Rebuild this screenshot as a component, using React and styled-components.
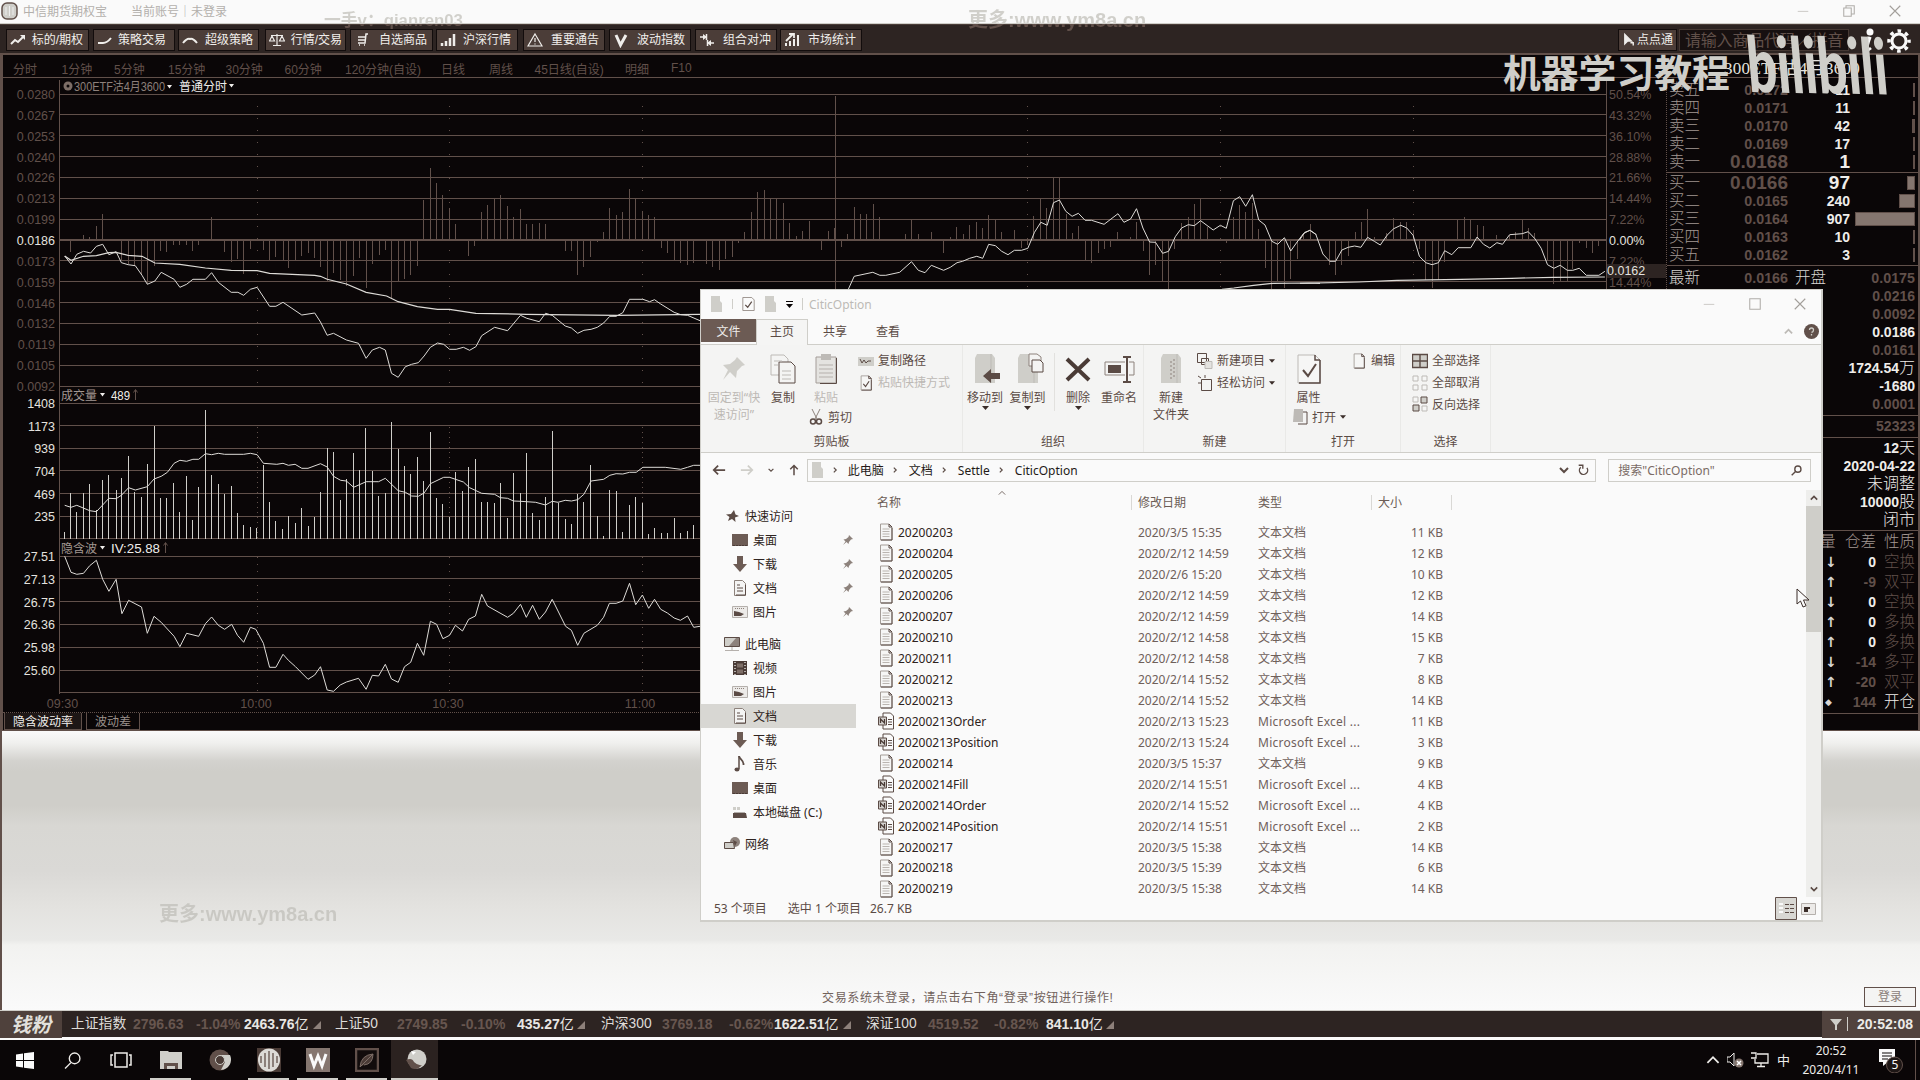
import React from "react";
import styled, { createGlobalStyle, css } from "styled-components";

const C = {
  ink: "#0a0607",
  brown: "#61504a",
  light: "#cfcec9",
  white: "#fafafa",
  bar: "#2d2422",
  button: "#4b3d38",
};
const UI = `"Noto Sans", "Noto Sans CJK SC", sans-serif`;
const APP = `"Liberation Sans", "Noto Sans CJK SC", sans-serif`;

const Global = createGlobalStyle`
  * { box-sizing: border-box; }
  body { margin: 0; background: ${C.ink}; overflow: hidden; }
`;

/* ---------- chart data ---------- */

const PRICE = [
  "145,768 159,792 172,763 187,754 203,759 216,739 230,733 244,764 260,755 272,788 287,794 303,797 318,826 330,853 347,843 361,817 390,838 403,862 418,853 432,838 460,838 474,818 489,847 518,877 533,877 546,886 561,868 576,862 604,919 618,919 634,907 676,945 705,939 718,966 733,1006 747,1000 776,1020 803,1030 820,1075 834,1050 850,1042 863,1050 877,1120 892,1132 908,1100 922,1093 937,1088 950,1068 964,1042 980,1029 994,1033 1007,1048 1022,1048 1038,1042 1052,1051 1066,1040 1079,1007 1108,982 1137,992 1166,946 1180,955 1208,965 1222,940 1237,946 1266,978 1280,984 1294,1000 1308,991 1324,988 1338,982 1352,969 1366,949 1380,949 1395,938 1410,898 1440,898 1455,905 1466,899 1480,912 1510,937 1525,944 1540,946 1568,962",
  "375,868 390,829 437,817 455,826 470,826 505,817 535,785 552,811 569,818 585,796 616,811 633,802 650,788 664,784 682,775 700,769 715,775 730,733 747,737 763,754 779,764 795,751 813,751 829,745 846,697 862,667 878,676 894,608 909,600 925,634 941,649 957,640 974,661 990,661 1022,673 1057,641 1072,667 1089,657 1104,626 1120,684 1137,726 1152,727 1170,760 1185,754 1202,710 1218,684 1235,674 1250,677 1266,662 1298,690 1316,676 1331,685 1349,602 1365,590 1380,619 1397,584 1413,660 1429,675 1446,724 1461,733 1478,713 1494,753 1510,726 1526,701 1542,691 1559,704",
  "-1,720 12,697 26,691 40,703 58,762 75,784 90,784 106,750 122,742 138,738 154,742 171,712 188,724 203,735 220,706 237,686 255,676 270,684 286,706 302,769 318,788 334,794 350,788 366,752 384,764 400,743 432,743 448,711 464,733 480,744 498,728 512,733 530,704 562,701 577,695 594,716 610,745 626,794 642,805 658,796 676,811 690,811 706,805 724,826 756,826 771,814",
];
const AVERAGE = [
  "145,768 159,781 187,769 216,767 244,758 260,757 287,766 318,769 347,789 403,793 460,804 518,811 576,812 604,820 705,826 718,829 733,838 776,852 820,877 866,888 892,905 935,920 980,928 1007,928 1066,940 1180,943 1380,946 1568,943",
  "1320,868 1350,864 1400,856 1450,850 1540,849 1568,850",
  "0,850 148,846 245,841 407,838 535,835 640,832 771,831",
];
const DELTA = [
  "158,756 187,706 201,712 216,678 230,642 272,780 287,793 301,797 316,826 330,853 345,797 360,752 374,757 389,735 403,735 417,735 431,753 445,735 474,651 503,756 518,786 532,778 546,822 561,746 590,750 604,784 618,770 634,783 646,805 662,780 676,768 690,758 704,774 718,802 733,847 747,818 762,840 776,857 792,828 805,774 820,864 834,793 849,764 863,750 877,893 892,842 906,836 920,824 935,797 949,600 964,504 978,549 992,586 1007,624 1020,672 1049,767 1064,738 1079,636 1092,615 1108,597 1121,586 1137,618 1150,650 1166,627 1179,672 1193,672 1208,669 1222,672 1266,753 1280,753 1294,825 1308,800 1323,770 1338,727 1352,697 1365,624 1380,645 1395,636 1410,567 1424,595 1439,633 1453,645 1466,651 1482,744 1496,760 1510,779 1525,788 1540,795 1554,790",
  "16,792 31,800 49,809 64,776 81,770 97,728 112,697 130,636 145,576 163,570 179,596 194,596 211,609 227,669 243,709 259,693 277,663 307,750 325,693 341,684 358,740 373,703 390,621 406,642 421,642 438,612 454,651 519,703 535,660 552,703 585,697 616,758 633,711 649,681 666,703 682,675 700,666 714,684 730,645 747,658 763,697 795,690 813,744 829,735 844,648 861,597 877,624 894,531 909,531 927,642 941,700 957,679 975,782 990,789 1007,759 1023,746 1038,741 1056,697 1088,712 1104,666 1121,752 1137,824 1152,795 1169,842 1185,868 1201,748 1218,669 1235,651 1250,612 1266,597 1284,680 1332,730 1349,651 1364,615 1380,636 1397,610 1412,687 1430,803 1445,868 1460,845 1478,863 1494,836 1510,777 1527,700 1544,672",
  "75,796 90,824 106,795 122,767 140,697 155,666 171,627 188,712 220,700 236,654 254,666 270,666 286,690 302,748 318,840 334,863 350,840 366,785 398,660 416,651 432,660 448,676 464,678 498,706 530,704 546,695 562,658 577,684 594,700 626,780 642,853 658,845 676,845 690,806 706,728 724,745 740,758 756,737",
];
const VOLUME =
  "145,516 158,400 171,456 187,398 201,371 216,450 230,359 243,345 260,389 272,355 288,288 301,395 317,411 330,312 345,199 359,415 373,415 389,368 403,457 418,348 431,479 445,382 460,151 474,345 489,373 503,403 519,378 532,459 546,495 561,501 575,504 590,316 604,426 617,483 633,507 646,468 662,490 675,444 690,498 705,471 718,396 733,263 747,276 763,420 776,357 792,279 805,330 819,205 834,333 848,407 863,399 877,186 892,267 906,317 920,342 935,292 949,363 964,216 978,414 991,432 1007,471 1020,336 1036,393 1050,321 1065,297 1079,427 1092,427 1108,429 1121,369 1137,474 1150,339 1166,400 1179,279 1193,459 1208,480 1222,411 1237,213 1250,429 1267,477 1280,492 1294,403 1308,427 1323,315 1338,468 1352,528 1365,390 1380,393 1395,516 1410,435 1424,411 1439,429 1453,522 1466,504 1482,519 1496,519 1510,474 1524,519 1540,513 1554,495";
const VOLUME_MA =
  "145,436 159,442 172,436 201,452 216,455 244,415 260,416 272,406 288,383 303,390 330,380 345,357 361,349 375,337 390,310 403,301 418,304 432,298 445,298 460,281 474,284 489,280 503,283 546,283 561,280 576,284 590,310 620,313 634,310 646,316 661,313 676,325 690,325 718,311 733,321 747,349 763,361 776,363 792,382 820,365 848,365 863,355 892,392 908,397 922,408 937,409 950,399 964,371 994,352 1007,352 1038,366 1052,383 1079,400 1108,403 1121,413 1137,415 1150,423 1166,424 1200,427 1222,435 1237,424 1250,427 1266,421 1280,423 1294,419 1308,403 1324,363 1352,358 1366,346 1380,341 1395,342 1410,337 1425,337 1440,322 1490,322 1525,328 1540,322 1554,316 1568,316";
const IV =
  "145,589 159,637 172,643 187,640 201,617 216,601 230,658 244,694 260,658 273,761 288,721 317,741 330,820 345,769 361,787 390,829 403,860 418,820 445,829 460,791 474,771 489,796 503,808 519,793 532,826 546,847 561,802 573,808 590,850 604,922 618,922 634,883 646,901 662,920 690,958 705,945 718,920 733,990 747,994 762,975 776,966 803,955 820,988 834,946 848,948 863,913 877,957 892,967 906,920 920,907 935,850 949,886 964,784 978,793 992,836 1007,826 1020,796 1036,813 1050,778 1065,768 1079,703 1092,738 1137,772 1150,760 1166,733 1179,772 1193,736 1208,778 1222,756 1237,718 1267,799 1280,811 1294,856 1308,820 1338,796 1352,772 1365,730 1380,730 1395,723 1410,670 1424,734 1439,705 1453,745 1466,718 1480,748 1495,759 1510,774 1524,781 1540,768 1554,802 1568,799";

/* each run of samples has its own origin and horizontal step */
const RUNS = [
  { x: 0, y: 0, k: 2.24 },
  { x: 700, y: 0, k: 2.529 },
  { x: 1300, y: 0, k: 2.529 },
];
const LOWER = { x: 0, y: 360, k: 2.24 };
const parse = (s, r) =>
  s.split(" ").map((p) => {
    const [a, b] = p.split(",").map(Number);
    return [r.x + a / r.k, r.y + b / 3];
  });
const toLine = (s, r) => parse(s, r).map((p) => p.map((n) => n.toFixed(1)).join(",")).join(" ");
const toBars = (s, r, base) =>
  parse(s, r).map(([x, y]) => `M${Math.floor(x) + 0.5},${base}V${y.toFixed(1)}`).join("");

/* ---------- shell ---------- */

const Screen = styled.div`
  position: relative; width: 1920px; height: 1080px; overflow: hidden;
  display: flex; flex-direction: column; background: ${C.ink}; font-family: ${APP}; white-space: nowrap;
`;
const TitleBar = styled.header`
  height: 24px; flex: none; display: flex; align-items: center; padding: 0 19px 2px 1px;
  background: ${C.white}; color: #b3b0ac; font-size: 12px; border-bottom: 1px solid ${C.light};
`;
const AppTitle = styled.span`margin-left: 5px; width: 108px;`;
const WindowButtons = styled.div`
  margin-left: auto; display: flex; align-items: center; gap: ${(p) => p.$gap}px;
`;
const Toolbar = styled.nav`
  height: 31px; flex: none; display: flex; align-items: flex-start; padding: 5px 0 0 7px;
  background: ${C.bar}; border-top: 1px solid #4a3d38; border-bottom: 2px solid ${C.brown};
`;
const ToolButton = styled.div`
  width: ${(p) => p.$w}px; margin-right: ${(p) => p.$gap}px; height: 20px; flex: none; display: flex; align-items: center;
  padding-right: ${(p) => p.$pad || 5}px; justify-content: space-between;
  background: ${C.button}; outline: 1px solid #120c0c; color: #f0eeeb; font-size: 12px; line-height: 20px;
  > svg { width: 16px; height: 16px; margin-left: 3px; }
`;
const SearchCode = styled.div`
  width: 170px; height: 22px; padding-left: 5px; font-size: 16px; line-height: 22px; letter-spacing: -0.2px;
  color: ${C.brown}; background: #171010; border: 1px solid #463934; margin-top: -1px;
`;
const ToolIcons = styled.div`
  display: flex; align-items: center; gap: 12px; margin-left: 12px; height: 22px;
`;
const Main = styled.main`
  height: 676px; flex: none; display: flex; background: ${C.ink};
  border-left: 3px solid ${C.brown}; border-right: 2px solid ${C.brown}; border-bottom: 1px solid ${C.brown};
`;
const ChartPane = styled.section`width: 1664px; flex: none; display: flex; flex-direction: column;`;
const Periods = styled.div`
  height: 23px; border-bottom: 1px solid ${C.brown}; color: ${C.brown};
  display: flex; align-items: center; padding: 4px 0 0 10px; font-size: 12px;
`;
const Period = styled.span`width: ${(p) => p.$w}px; flex: none;`;
const Section = styled.div`display: flex; height: ${(p) => p.$h}px; flex: none;`;
const Axis = styled.div`
  width: 56px; padding: ${(p) => p.$top}px 4px 0 0; text-align: right; flex: none; font-size: 12.5px;
  color: ${(p) => (p.$bright ? "#e4e2df" : C.brown)};
`;
const Percents = styled.div`
  width: 60px; margin-left: 2px; padding-top: 7px; font-size: 12.5px; color: ${C.brown};
  border-right: 1px dotted ${C.brown};
`;
const Tick = styled.div`
  height: ${(p) => p.$h}px; line-height: ${(p) => p.$h}px; ${(p) => p.$on && css`color: #e4e2df;`}
`;
const PriceTag = styled.div`
  height: 14px; line-height: 14px; margin: -9px 0 -5px -2px; background: #2d2422; color: #e4e2df; position: relative; font-size: 12.5px;
`;
const Plot = styled.svg`display: block; flex: none;`;
const TimeAxis = styled.div`
  height: 19px; display: flex; padding-left: 28px; color: ${C.brown}; font-size: 12.5px; line-height: 20px;
  border-bottom: 1px dotted ${C.brown};
`;
const Time = styled.span`width: 192px; text-align: center; &:first-child { width: 63px; margin-right: 66px; }`;
const Tabs = styled.div`display: flex; gap: 4px; padding-left: 1px;`;
const Tab = styled.div`
  width: ${(p) => p.$w}px; height: 17px; line-height: 18px; text-align: center; font-size: 12px;
  border: 1px solid ${C.brown}; border-top: 0; color: ${(p) => (p.$on ? "#efedea" : "#9b918c")};
  background: ${(p) => (p.$on ? "#1d1615" : "transparent")};
`;

/* ---------- order book ---------- */

const Book = styled.aside`flex: 1; display: flex; flex-direction: column; font-size: 14px;`;
const BookTitle = styled.div`
  height: 23px; border-bottom: 1px solid ${C.brown}; color: #e4e2df; font: 17px/27px "Liberation Serif", "Noto Sans CJK SC", serif;
  padding-left: 57px; letter-spacing: 0.3px;
`;
const BookGroup = styled.div`
  padding: ${(p) => p.$top || 1}px 0 ${(p) => p.$bottom || 1}px; border-bottom: 1px solid ${C.brown};
`;
const Level = styled.div`
  height: 18px; display: grid; grid-template-columns: 40px 79px 62px 5px 60px; align-items: center; padding-left: 2px;
`;
const Label = styled.span`font-size: 15.5px; line-height: 18px; color: ${(p) => (p.$bright ? "#d9d6d3" : "#a29792")}; font-weight: 300;`;
const Price = styled.span`
  text-align: right; font-weight: bold; color: ${C.brown}; font-size: ${(p) => (p.$big ? 19 : 14.3)}px; line-height: 18px;
`;
const Amount = styled(Price)`color: #efedea; font-size: ${(p) => (p.$big ? 19 : 14)}px;`;
const Depth = styled.span`
  grid-column: 5; justify-self: end; width: ${(p) => p.$w}px; height: 14px; background: ${(p) => (p.$w > 3 ? "#85766f" : C.brown)};
  border: 1px solid ${C.brown};
`;
const Stat = styled.div`
  height: 18px; line-height: 18px; text-align: right; padding-right: 3px; font-weight: bold; font-size: 14px;
  color: ${(p) => (p.$on ? "#efedea" : C.brown)};
  > span { font-size: 16px; font-weight: 300; }
`;
const StatPair = styled.div`
  height: 18px; display: grid; grid-template-columns: 40px 79px 7px 40px 1fr; align-items: center; padding: 0 3px 0 2px;
`;
const Trade = styled.div`
  height: 20px; line-height: 20px; display: grid; grid-template-columns: 14px 37px 39px;
  justify-content: end; padding-right: 3px; align-items: center; text-align: right;
  color: ${(p) => (p.$on ? "#efedea" : C.brown)}; font-weight: bold;
  > :first-child { margin-left: ${(p) => (p.$head ? -5 : 0)}px; text-align: left; }
`;
const Kind = styled.span`font-size: 15.5px; font-weight: 300; color: ${(p) => (p.$on ? "#efedea" : p.$head ? "#a29792" : C.brown)};`;
const Arrow = styled.span`color: #d9d6d3; font-size: ${(p) => (p.$small ? 9 : 14)}px; font-family: "DejaVu Sans", sans-serif;`;

/* ---------- lower area, index bar, taskbar ---------- */

const Backdrop = styled.section`
  flex: 1; display: flex; justify-content: space-between; align-items: flex-end; padding: 0 4px 3px 820px;
  border-left: 2px solid ${C.brown}; color: #71625c; font-size: 12px;
  background: linear-gradient(#fafafa 0, #f0f0ee 12px, #d3d2ce 30px, #cfcec9 40px, #cfcec9 74px, #d8d7d3 95px, #dad9d6 140px, #e3e2df 175px, #e9e9e7 209px, #f2f2f0 214px, #f6f6f5 245px, #f9f9f9 272px, #fafafa 280px);
`;
const Notice = styled.span`letter-spacing: 0.65px; line-height: 18px;`;
const Login = styled.span`
  width: 52px; height: 20px; border: 1px solid ${C.brown}; text-align: center; line-height: 18px; color: #8b807b; background: #f4f4f3;
`;
const IndexBar = styled.div`
  height: 30px; flex: none; display: flex; align-items: center; background: ${C.bar};
  border-top: 1px solid ${C.light}; border-bottom: 3px solid ${C.white}; font-size: 14px; color: #d9d6d3;
`;
const IndexLogo = styled.div`
  width: 62px; height: 27px; background: #4f413c; text-align: center; color: #e2e0dc; flex: none; margin-right: 9px;
  font: italic bold 20px/26px "Noto Sans CJK SC", sans-serif;
`;
const Cell = styled.span`
  width: ${(p) => p.$w}px; flex: none; line-height: 26px;
  ${(p) => p.$kind === "name" && css`font-size: 13.8px; color: #dedbd8;`}
  ${(p) => p.$kind === "dim" && css`font-weight: bold; color: #67564f;`}
  ${(p) => p.$kind === "sum" && css`font-weight: bold; color: #e9e7e4; > i { font-style: normal; font-weight: 400; }`}
`;
const Clock = styled.div`
  margin-left: auto; width: 98px; height: 27px; background: #51433e; display: flex; align-items: center; gap: 5px;
  padding-left: 8px; font-weight: bold; color: #eceae7;
  > span { margin-left: auto; padding-right: 7px; }
`;
const Taskbar = styled.footer`height: 40px; flex: none; display: flex; background: ${C.ink};`;
const Task = styled.div`
  width: ${(p) => p.$w || 49}px; height: 40px; display: flex; align-items: center; justify-content: center;
  background: ${(p) => (p.$on ? "#2b2220" : "transparent")};
  box-shadow: ${(p) => (p.$open ? `inset 0 -2px 0 ${C.light}` : "none")};
  ${(p) => p.$open && css`width: 41px; margin: 0 4px;`}
  ${(p) => p.$on && css`width: 47px; margin: 0;`}
`;
const Tray = styled.div`
  margin-left: auto; display: flex; align-items: center; color: #efedea; font: 12px/19px ${UI};
  > svg { flex: none; }
`;
const TrayText = styled.span`width: ${(p) => p.$w}px; text-align: center; font-size: ${(p) => p.$size || 12}px;`;
const TrayGap = styled.span`width: ${(p) => p.$w}px;`;
const ShowDesktop = styled.span`width: 5px; height: 40px; border-left: 1px solid ${C.brown};`;

/* ---------- explorer window ---------- */

const Explorer = styled.section`
  position: absolute; left: 700px; top: 289px; width: 1123px; height: 633px; background: ${C.white};
  border: 1px solid ${C.light}; border-right-width: 2px; border-bottom-width: 2px; display: flex; flex-direction: column;
  font: 12px/17px ${UI}; color: #3a2d29;
`;
const ExplorerTitle = styled.div`
  height: 29px; flex: none; display: flex; align-items: center; padding: 0 15px 1px 9px; color: #bdbab6;
`;
const QuickAccess = styled.div`display: flex; align-items: center; gap: 9px; margin-right: 6px;`;
const Divider = styled.i`width: 1px; height: ${(p) => p.$h || 12}px; background: ${C.light};`;
const RibbonTabs = styled.div`
  height: 26px; flex: none; display: flex; border-bottom: 1px solid ${C.light}; padding-right: 2px;
`;
const RibbonTab = styled.div`
  width: ${(p) => p.$w}px; height: ${(p) => (p.$file ? 23 : 26)}px; line-height: 25px; text-align: center; color: #5b4b45;
  ${(p) => p.$file && css`background: #6c5b54; color: #eeecea;`}
  ${(p) => p.$on && css`border: 1px solid ${C.light}; border-bottom: 0; background: #f5f5f4; line-height: 24px;`}
`;
const RibbonEnd = styled.div`margin-left: auto; display: flex; align-items: center; gap: 11px;`;
const Ribbon = styled.div`
  height: 108px; flex: none; display: flex; background: #f4f4f3; border-bottom: 1px solid ${C.light};
`;
const Group = styled.div`
  width: ${(p) => p.$w}px; flex: none; display: flex; flex-direction: column; border-right: 1px solid #e9e9e7; color: #5b4b45;
`;
const GroupBody = styled.div`height: 88px; display: flex; padding-left: ${(p) => p.$pad || 0}px;`;
const GroupName = styled.div`text-align: center; height: 18px; line-height: 18px;`;
const Big = styled.div`
  width: ${(p) => p.$w}px; flex: none; padding-top: 8px; display: flex; flex-direction: column; align-items: center;
  text-align: center; color: ${(p) => (p.$off ? "#bdb9b5" : "inherit")};
  > svg:first-child { width: 32px; height: 32px; margin-bottom: 4px; flex: none; }
`;
const SmallColumn = styled.div`padding: 5px 0 0 ${(p) => p.$pad || 0}px; display: flex; flex-direction: column;`;
const Small = styled.div`
  height: 21.7px; flex: none; display: flex; align-items: center; gap: 4px; color: ${(p) => (p.$off ? "#bdb9b5" : "inherit")};
  margin-top: ${(p) => p.$mt || 0}px; align-self: ${(p) => (p.$mt ? "flex-start" : "auto")};
  margin-left: ${(p) => p.$ml || 0}px;
  > svg { width: 16px; height: 16px; flex: none; }
  > svg.caret { width: 6px; height: 4px; }
`;
const BodyDivider = styled.i`width: 1px; height: 58px; margin: 8px 5px 0 5px; background: #e2e1de;`;
const AddressRow = styled.div`
  height: 36px; flex: none; display: flex; align-items: center; padding: 0 10px 2px 11px;
`;
const NavArrows = styled.div`display: flex; align-items: center; width: 95px; gap: 14px;`;
const Address = styled.div`
  width: 791px; height: 23px; border: 1px solid ${C.light}; display: flex; align-items: center; color: #241a18;
  padding: 0 6px 0 3px;
`;
const Crumb = styled.span`width: ${(p) => p.$w}px; flex: none; display: flex; align-items: center; gap: 8px; > svg { flex: none; }`;
const AddressEnd = styled.span`margin-left: auto; display: flex; align-items: center; gap: 9px;`;
const SearchBox = styled.div`
  margin-left: 12px; width: 203px; height: 23px; border: 1px solid ${C.light}; display: flex; align-items: center;
  justify-content: space-between; padding: 0 8px 0 9px; color: #7a6c66;
`;
const Content = styled.div`flex: 1; display: flex; min-height: 0;`;
const Tree = styled.div`width: 155px; padding-top: 15px; flex: none;`;
const TreeItem = styled.div`
  height: 24px; display: flex; align-items: center; gap: ${(p) => (p.$root ? 5 : 5)}px;
  padding: 0 3px 0 ${(p) => (p.$root ? 23 : 31)}px; margin-top: ${(p) => p.$mt || 0}px;
  background: ${(p) => (p.$on ? "#d8d7d3" : "transparent")}; color: #2e2320;
  > svg { width: 16px; height: 16px; flex: none; }
  > svg:nth-child(3) { width: 10px; height: 10px; margin-left: auto; }
`;
const Files = styled.div`flex: 1; display: flex; flex-direction: column;`;
const SortMark = styled.div`height: 5px; flex: none; padding-left: 142px; display: flex;`;
const fileColumns = css`display: grid; flex: none; grid-template-columns: 20px 240px 120px 120px 65px; padding-left: 22px; align-items: center;`;
const HeadRow = styled.div`
  ${fileColumns} height: 17px; margin-bottom: 11px; color: #6b5c55; padding-left: 21px;
  grid-template-columns: 254px 7px 120px 113px 7px 73px 1px; > i { height: 15px; width: 1px; background: #d9d8d5; }
`;
const FileRow = styled.div`
  ${fileColumns} height: 20.98px; color: #2e2320; > svg { width: 16px; height: 18px; }
`;
const Meta = styled.span`color: #6f605a; text-align: ${(p) => (p.$right ? "right" : "left")}; letter-spacing: ${(p) => (p.$wide ? 0.25 : 0)}px;`;
const ScrollBar = styled.div`
  width: 15px; margin: 1px 0 0; background: #eeeeec; display: flex; flex-direction: column; align-items: center; flex: none;
`;
const Thumb = styled.div`width: 15px; height: 126px; background: ${C.light};`;
const ScrollEnd = styled.div`height: 16px; display: flex; align-items: center; margin-top: ${(p) => (p.$last ? "auto" : 0)};`;
const StatusRow = styled.div`
  height: 23px; flex: none; display: flex; align-items: center; padding: 0 5px 0 13px; color: #5b4b45;
  > span { margin-right: 21px; } > span + span { margin-right: 9px; }
`;
const Views = styled.div`margin-left: auto; display: flex; align-items: center; gap: 4px; height: 23px;`;

/* ---------- overlays ---------- */

const Watermark = styled.div`
  position: absolute; left: ${(p) => p.$x}px; top: ${(p) => p.$y}px; font: bold ${(p) => p.$size}px/24px ${APP};
  letter-spacing: ${(p) => p.$ls || 0}px; color: transparent; background-clip: text; -webkit-background-clip: text;
  background-image: ${(p) => (p.$split ? `linear-gradient(#d0cfca ${p.$split}px, #61504a ${p.$split}px)` : "linear-gradient(#c9c8c3,#c9c8c3)")};
`;
const Course = styled.div`
  position: absolute; left: 1503px; top: 48px; font: bold 37.8px/46px "Noto Sans CJK SC", sans-serif; color: ${C.light};
`;
const VideoLogo = styled.div`
  position: absolute; left: 1743px; top: 24px; font: 900 77px/76px Lato, sans-serif; color: ${C.light};
  transform-origin: 0 0; transform: rotate(1deg) scaleX(0.68) skewX(9deg);
`;
const Pointer = styled.svg`position: absolute; left: 1796px; top: 588px;`;

/* ---------- icons ---------- */

const Caret = ({ fill = "#3a2d29" }) => (
  <svg className="caret" width="7" height="4" viewBox="0 0 7 4"><path d="M0 0h7L3.5 4z" fill={fill} /></svg>
);
const Chevron = ({ d = "down", c = "#5b4b45", s = 9, w = 2 }) => {
  const rot = { down: 0, up: 180, right: -90, left: 90 }[d];
  return (
    <svg width={s} height={s} viewBox="0 0 10 10"><path transform={`rotate(${rot} 5 5)`} d="M1 3l4 4 4-4" fill="none" stroke={c} strokeWidth={w} /></svg>
  );
};
const S = ({ children, w = 16, h = 16, vb = "0 0 16 16", c = "#efedea", sw = 1.5 }) => (
  <svg width={w} height={h} viewBox={vb} fill="none" stroke={c} strokeWidth={sw}>{children}</svg>
);
const WinMin = () => <S w={12} c="#bdbab6" sw={1}><path d="M1 8.5h14" /></S>;
const WinMax = () => <S w={12} h={12} c="#b0ada9" sw={1.4}><path d="M1 1h14v14H1z" /></S>;
const WinRestore = () => <S w={12} h={12} c="#b0ada9" sw={1.4}><path d="M1 4h10v11H1zM4 4V1h11v11h-4" /></S>;
const WinClose = () => <S w={12} h={12} c="#a39f9b" sw={1.5}><path d="M1 1l14 14M15 1L1 15" /></S>;

const toolIcons = {
  up: <><path d="M1 12l4-4 3 2 6-6" strokeWidth="2" /><path d="M10 3h5v5z" fill="#efedea" stroke="none" /></>,
  curve: <path d="M1 11h5q4 0 8-5" strokeWidth="2" />,
  arc: <path d="M1 11q4-5 7-4 3-1 7 4" strokeWidth="2" />,
  scales: <path d="M8 2v11M4 13.5h8M2 3.5h12M3 4l-2.500 5h5zM13 4l-2.500 5h5z" strokeWidth="1.200" />,
  cart: <path d="M14 2h-2l-1 9H4M4 5h8M4 8h8M5 13h1M10 13h1" />,
  bars: <path d="M2 14v-3M6 14V9M10 14V6M14 14V2" strokeWidth="2.500" />,
  warn: <path d="M8 2l7 12H1zM8 6v4M8 11.500v1" strokeWidth="1.200" />,
  v: <path d="M3 3l4.500 10L13 3" strokeWidth="3" />,
  hedge: <><path d="M1 5h6M9 11h6M7.500 2v6M8.500 8v6" /><path d="M4 2l4 3-4 3zM12 8l-4 3 4 3z" fill="#efedea" stroke="none" /></>,
  stats: <><path d="M2 14v-3M6 14V9M10 14V7M14 14V3" strokeWidth="2" /><path d="M2 9l7-7M5 2h5v4" strokeWidth="1.800" /></>,
};

const Page = ({ lines, big }) => (
  <svg viewBox="0 0 16 18">
    <path d="M2.500 1h8.500l3 3v13h-11.500z" fill="#f6f6f5" stroke="#a49d98" />
    <path d="M11 1l3 3h-3zM14 5v12H3" fill="none" stroke="#5b4b45" />
    {lines && <path d="M4.500 6h7M4.500 8.500h7M4.500 11h7M4.500 13.500h7" stroke="#bab5b0" />}
    {big && <path d="M5 10l2.500 3 4-6" fill="none" stroke="#5b4b45" strokeWidth="1.300" />}
  </svg>
);
const Excel = () => (
  <svg viewBox="0 0 16 18">
    <path d="M5 1h7.500l3 3v13H5z" fill="#fafafa" stroke="#5b4b45" />
    <path d="M10 7.500h4M10 10h4M10 12.500h4" stroke="#5b4b45" />
    <path d="M.500 5h8v8h-8z" fill="#d5d2cf" stroke="#5b4b45" />
    <path d="M2.500 11V7l4 4V7" stroke="#4a3b36" strokeWidth="1.300" fill="none" />
  </svg>
);
const FolderBig = ({ children }) => (
  <svg viewBox="0 0 32 32"><path d="M8 1h15l3 4v25H6V5z" fill="#cfcec9" /><path d="M22 1v29" stroke="#bdbbb6" />{children}</svg>
);
const FolderSmall = () => <svg width="13" height="16" viewBox="0 0 13 16"><path d="M1 0h9v5l2 2v9H1z" fill="#cfcec9" /></svg>;

const tree = {
  star: <svg viewBox="0 0 16 16"><path d="M10 2l1.500 4.500L15 8l-4 1.500.500 4.500-3.500-3-4 2 1.500-4L2 6.500l5-.500z" fill="#5b4b45" /></svg>,
  desk: <svg viewBox="0 0 16 16"><path d="M0 2h16v12H0z" fill="#6c5b54" /><path d="M1 13.500h14" stroke="#4a3b36" strokeDasharray="2 1" /></svg>,
  down: <svg viewBox="0 0 16 16"><path d="M5 0h6v8h4l-7 8-7-8h4z" fill="#6c5b54" /></svg>,
  doc: <svg viewBox="0 0 16 16"><path d="M2.500.500h8l3 3v12h-11z" fill="#f4f4f3" stroke="#8d827c" /><path d="M5 5h3M5 8h6M5 11h6M13.500 5v10H4" stroke="#5b4b45" fill="none" /></svg>,
  pic: <svg viewBox="0 0 16 16"><path d="M.500 2.500h15v11H.500z" fill="#eceae8" stroke="#b5b0ac" /><path d="M2 11V7l5 1 5 2-3 2H2z" fill="#5b4b45" /><path d="M3 4.500h9" stroke="#8d827c" strokeDasharray="1 1" /></svg>,
  pc: <svg viewBox="0 0 16 16"><path d="M.500 1.500h15v9H.500z" fill="#8d827c" stroke="#5b4b45" /><path d="M1 2h11L5 10H1z" fill="#cfcec9" /><path d="M8 11v3M1 14.500h14" stroke="#b5b0ac" /></svg>,
  video: <svg viewBox="0 0 16 16"><path d="M1 1h14v14H1z" fill="#4a3b36" /><path d="M3 2v13M13 2v13" stroke="#d9d8d5" strokeDasharray="1 2" strokeWidth="1.500" /><path d="M5 3.500h6v4H5zM5 9.500h6v4H5z" fill="#7d6e67" /></svg>,
  music: <svg viewBox="0 0 16 16"><path d="M7 0c1 4 5 4 4.500 9" fill="none" stroke="#5b4b45" strokeWidth="1.800" /><path d="M7 0v13" stroke="#5b4b45" strokeWidth="1.500" /><ellipse cx="5" cy="13.500" rx="2.500" ry="2" fill="#5b4b45" /></svg>,
  disk: <svg viewBox="0 0 16 16"><path d="M1 3h3v3H1zM5 3h3v3H5z" fill="#cfcec9" /><path d="M1 9h13l1 5H1z" fill="#5b4b45" /><path d="M2 8.500h11" stroke="#b5b0ac" /></svg>,
  net: <svg viewBox="0 0 16 16"><circle cx="11" cy="6" r="5" fill="#8d827c" /><path d="M9 4l4 2-2 4" fill="#5b4b45" /><path d="M.500 6.500h9l1 6H.500z" fill="#cfcec9" stroke="#5b4b45" /></svg>,
  pin: <svg viewBox="0 0 10 10"><path d="M6 0l4 4-2 .500L6 7l-.500 2-2-2L0 10l2.500-3.500-2-2L3 4l2.500-2z" fill="#8d827c" /></svg>,
};

const Gear = ({ s = 24, c = "#fafafa" }) => (
  <svg width={s} height={s} viewBox="0 0 24 24">
    <circle cx="12" cy="12" r="7" fill="none" stroke={c} strokeWidth="3" />
    <circle cx="12" cy="12" r="10" fill="none" stroke={c} strokeWidth="3.500" strokeDasharray="3.600 4.254" strokeDashoffset="1.800" />
  </svg>
);

/* ---------- content lists ---------- */

const TOOLS = [
  ["up", "标的/期权", 81, 6], ["curve", "策略交易", 80, 5, 8], ["arc", "超级策略", 79, 8], ["scales", "行情/交易", 79, 6, 3],
  ["cart", "自选商品", 81, 5], ["bars", "沪深行情", 80, 7, 6], ["warn", "重要通告", 80, 6], ["v", "波动指数", 80, 6], ["hedge", "组合对冲", 80, 5], ["stats", "市场统计", 80, 0],
];
const PERIODS = [
  ["分时", 48.600], ["1分钟", 52.400], ["5分钟", 54], ["15分钟", 57.500], ["30分钟", 59], ["60分钟", 60.500], ["120分钟(自设)", 96],
  ["日线", 48], ["周线", 45.500], ["45日线(自设)", 90.500], ["明细", 46], ["F10", 30],
];
const PRICES = ["0.0280", "0.0267", "0.0253", "0.0240", "0.0226", "0.0213", "0.0199", "0.0186", "0.0173", "0.0159", "0.0146", "0.0132", "0.0119", "0.0105", "0.0092"];
const PCTS = ["50.54%", "43.32%", "36.10%", "28.88%", "21.66%", "14.44%", "7.22%", "0.00%", "7.22%"];
const SELLS = [["卖五", "0.0172", "11", 2], ["卖四", "0.0171", "11", 2], ["卖三", "0.0170", "42", 3], ["卖二", "0.0169", "17", 2], ["卖一", "0.0168", "1", 1]];
const BUYS = [["买一", "0.0166", "97", 8], ["买二", "0.0165", "240", 16], ["买三", "0.0164", "907", 60], ["买四", "0.0163", "10", 2], ["买五", "0.0162", "3", 1]];
const TRADES = [["↓", "0", "空换"], ["↑", "-9", "双平"], ["↓", "0", "空换"], ["↑", "0", "多换"], ["↑", "0", "多换"], ["↓", "-14", "多平"], ["↑", "-20", "双平"], ["◆", "144", "开仓"]];
const TREE = [
  ["star", "快速访问", { root: 1 }], ["desk", "桌面", { pin: 1 }], ["down", "下载", { pin: 1 }], ["doc", "文档", { pin: 1 }], ["pic", "图片", { pin: 1 }],
  ["pc", "此电脑", { root: 1, mt: 8 }], ["video", "视频", {}], ["pic", "图片", {}], ["doc", "文档", { on: 1 }], ["down", "下载", {}], ["music", "音乐", {}],
  ["desk", "桌面", {}], ["disk", "本地磁盘 (C:)", {}], ["net", "网络", { root: 1, mt: 8 }],
];
const FILES = [
  ["20200203", "2020/3/5 15:35", 11], ["20200204", "2020/2/12 14:59", 12], ["20200205", "2020/2/6 15:20", 10], ["20200206", "2020/2/12 14:59", 12],
  ["20200207", "2020/2/12 14:59", 14], ["20200210", "2020/2/12 14:58", 15], ["20200211", "2020/2/12 14:58", 7], ["20200212", "2020/2/14 15:52", 8],
  ["20200213", "2020/2/14 15:52", 14], ["20200213Order", "2020/2/13 15:23", 11, 1], ["20200213Position", "2020/2/13 15:24", 3, 1], ["20200214", "2020/3/5 15:37", 9],
  ["20200214Fill", "2020/2/14 15:51", 4, 1], ["20200214Order", "2020/2/14 15:52", 4, 1], ["20200214Position", "2020/2/14 15:51", 2, 1],
  ["20200217", "2020/3/5 15:38", 14], ["20200218", "2020/3/5 15:39", 6], ["20200219", "2020/3/5 15:38", 14],
];
const INDEXES = [
  ["上证指数", 62, "2796.63", 63, "-1.04%", 48, "2463.76", 69], ["上证50", 62, "2749.85", 64, "-0.10%", 56, "435.27", 60],
  ["沪深300", 61, "3769.18", 67, "-0.62%", 45, "1622.51", 69], ["深证100", 62, "4519.52", 66, "-0.82%", 52, "841.10", 60],
];
const INDEX_GAPS = [14, 16, 15, 0];

/* ---------- charts ---------- */

const GRID = { stroke: C.brown, strokeWidth: 1, shapeRendering: "crispEdges", fill: "none" };
const HLines = ({ ys, x2 = 1607 }) => <path {...GRID} d={ys.map((y) => `M60,${Math.floor(y) + 0.5}H${x2}`).join("")} />;
const seq = (a, step, n) => Array.from({ length: n }, (_, i) => a + i * step);

function PriceChart() {
  return (
    <Plot width="1548" height="309" viewBox="59 78 1548 309">
      <path {...GRID} d="M59.500,80V387M1606.500,80V387" />
      <HLines ys={seq(94, 20.860, 15)} />
      <path {...GRID} strokeWidth="2" d="M60,240H1607" />
      <path {...GRID} strokeDasharray="1 11" d="M257.500,94V387M449.500,94V387M642.500,94V387M1027.500,94V289M1220.500,94V289M1413.500,94V289" />
      <path {...GRID} d="M835.500,96V289" />
      {DELTA.map((s, i) => <path key={i} {...GRID} d={toBars(s, RUNS[i], 240)} />)}
      {AVERAGE.map((s, i) => <polyline key={i} points={toLine(s, RUNS[i])} fill="none" stroke="#dddbd7" strokeWidth="1.200" />)}
      {PRICE.map((s, i) => <polyline key={i} points={toLine(s, RUNS[i])} fill="none" stroke="#dddbd7" strokeWidth="1" />)}
      <circle cx="68" cy="86" r="4.500" fill="#7d6e67" />
      <circle cx="68" cy="86" r="1.500" fill="#0a0607" />
      <g fontFamily={APP} fontSize="12" fill="#8d807a">
        <text x="74" y="91" textLength="91" lengthAdjust="spacingAndGlyphs">300ETF沽4月3600</text>
        <text x="179" y="91" fill="#efedea">普通分时</text>
      </g>
      <path d="M167,85h5l-2.500,3.500zM229,84h5l-2.500,3.500z" fill="#efedea" />
    </Plot>
  );
}
function VolumeChart() {
  return (
    <Plot width="1548" height="153" viewBox="59 387 1548 153">
      <path {...GRID} d="M59.500,387V540" />
      <HLines ys={seq(403, 22.660, 7)} />
      <path {...GRID} strokeDasharray="1 4" d="M257.500,427V539M449.500,427V539M642.500,427V539" />
      <path {...GRID} stroke="#cfcec9" d={toBars(VOLUME, LOWER, 539)} />
      <polyline points={toLine(VOLUME_MA, LOWER)} fill="none" stroke="#dddbd7" strokeWidth="1" />
      <g fontFamily={APP} fontSize="12">
        <text x="61" y="400" fill="#a29792">成交量</text>
        <text x="111" y="399.500" fill="#efedea" textLength="19" lengthAdjust="spacingAndGlyphs">489</text>
      </g>
      <path d="M100,393h5l-2.500,3.500z" fill="#efedea" />
      <path d="M135.500,400V390M133.500,392.500l2,-3 2,3" stroke={C.brown} fill="none" />
    </Plot>
  );
}
function IvChart() {
  return (
    <Plot width="1548" height="154" viewBox="59 540 1548 154">
      <path {...GRID} d="M59.500,540V694" />
      <HLines ys={seq(556, 22.800, 7)} />
      <path {...GRID} strokeDasharray="1 6" d="M257.500,557V693M449.500,557V693M642.500,557V693" />
      <polyline points={toLine(IV, LOWER)} fill="none" stroke="#dddbd7" strokeWidth="1" />
      <g fontFamily={APP} fontSize="12">
        <text x="61" y="553" fill="#a29792">隐含波</text>
        <text x="111" y="552.500" fill="#efedea" textLength="49" lengthAdjust="spacingAndGlyphs">IV:25.88</text>
      </g>
      <path d="M100,546h5l-2.500,3.500z" fill="#efedea" />
      <path d="M165.500,553V543M163.500,545.500l2,-3 2,3" stroke={C.brown} fill="none" />
    </Plot>
  );
}

function Chart() {
  return (
    <ChartPane>
      <Periods>{PERIODS.map(([t, w]) => <Period key={t} $w={w}>{t}</Period>)}</Periods>
      <Section $h={309}>
        <Axis $top={7}>{PRICES.map((p) => <Tick key={p} $h={20.860} $on={p === "0.0186"}>{p}</Tick>)}</Axis>
        <PriceChart />
        <Percents>
          {PCTS.map((p, i) => <Tick key={i} $h={20.860} $on={p === "0.00%"}>{p}</Tick>)}
          <PriceTag>0.0162</PriceTag>
          <Tick $h={20.860}>14.44%</Tick>
        </Percents>
      </Section>
      <Section $h={153}>
        <Axis $top={6} $bright>{[1408, 1173, 939, 704, 469, 235].map((v) => <Tick key={v} $h={22.660}>{v}</Tick>)}</Axis>
        <VolumeChart />
      </Section>
      <Section $h={154}>
        <Axis $top={6} $bright>{["27.51", "27.13", "26.75", "26.36", "25.98", "25.60"].map((v) => <Tick key={v} $h={22.800}>{v}</Tick>)}</Axis>
        <IvChart />
      </Section>
      <TimeAxis><Time>09:30</Time><Time>10:00</Time><Time>10:30</Time><Time>11:00</Time></TimeAxis>
      <Tabs><Tab $w={78} $on>隐含波动率</Tab><Tab $w={54}>波动差</Tab></Tabs>
    </ChartPane>
  );
}

const LevelRow = ({ row: [name, price, amount, depth], big }) => (
  <Level><Label>{name}</Label><Price $big={big}>{price}</Price><Amount $big={big}>{amount}</Amount><Depth $w={depth} /></Level>
);

function OrderBook() {
  return (
    <Book>
      <BookTitle>300ETF沽4月3600</BookTitle>
      <BookGroup $top={3} $bottom={1}>{SELLS.map((r) => <LevelRow key={r[0]} row={r} big={r[0] === "卖一"} />)}</BookGroup>
      <BookGroup $top={1} $bottom={1}>{BUYS.map((r) => <LevelRow key={r[0]} row={r} big={r[0] === "买一"} />)}</BookGroup>
      <BookGroup $top={3} $bottom={2}>
        <StatPair><Label $bright>最新</Label><Price>0.0166</Price><i /><Label $bright>开盘</Label><Price>0.0175</Price></StatPair>
        <Stat>0.0216</Stat><Stat>0.0092</Stat><Stat $on>0.0186</Stat><Stat>0.0161</Stat>
        <Stat $on>1724.54<span>万</span></Stat><Stat $on>-1680</Stat><Stat>0.0001</Stat>
      </BookGroup>
      <BookGroup $top={1} $bottom={2}><Stat>52323</Stat></BookGroup>
      <BookGroup $top={1} $bottom={1}>
        <Stat $on>12<span>天</span></Stat><Stat $on>2020-04-22</Stat><Stat $on><span>未调整</span></Stat><Stat $on>10000<span>股</span></Stat><Stat $on><span>闭市</span></Stat>
      </BookGroup>
      <BookGroup $top={1} $bottom={1}>
        <Trade $head><Kind $head>量</Kind><Kind $head>仓差</Kind><Kind $head>性质</Kind></Trade>
        {TRADES.map(([a, n, k], i) => (
          <Trade key={i} $on={n === "0"}><Arrow $small={a === "◆"}>{a}</Arrow><span>{n}</span><Kind $on={k === "开仓"}>{k}</Kind></Trade>
        ))}
      </BookGroup>
    </Book>
  );
}

/* ---------- explorer ---------- */

function RibbonBar() {
  return (
    <Ribbon>
      <Group $w={262}>
        <GroupBody $pad={6}>
          <Big $w={54} $off><svg viewBox="0 0 32 32"><path d="M19 4l8 8-3 1-5 5-1 7-6-6-7 8 5-10-5-5 7-1 5-4z" fill="#cfcec9" /></svg><span>固定到“快</span><span>速访问”</span></Big>
          <Big $w={44}><svg viewBox="0 0 32 32"><path d="M4 2h13l4 4v16H4z" fill="#f4f4f3" stroke="#bdbab6" /><path d="M12 9h12l4 4v17H12z" fill="#f4f4f3" stroke="#5b4b45" /><path d="M7 8h8M7 12h4M15 18h9M15 22h9M15 26h9" stroke="#bdbab6" /></svg><span>复制</span></Big>
          <Big $w={42} $off>
            <svg viewBox="0 0 32 32"><path d="M6 4h20v26H6z" fill="#e4e3e0" stroke="#a49d98" /><path d="M11 1h10v6H11z" fill="#bdbab6" /><path d="M9 12h14M9 16h14M9 20h14M9 24h14" stroke="#b5b0ac" /><path d="M26.500 5v25.500H10" fill="none" stroke="#5b4b45" /></svg><span>粘贴</span>
          </Big>
          <SmallColumn $pad={11}>
            <Small><svg viewBox="0 0 16 16"><path d="M0 4h16v9H0z" fill="#cfcec9" /><path d="M2 6l2 4 2-3 2 3 2-2h3" stroke="#5b4b45" fill="none" /></svg>复制路径</Small>
            <Small $off><Page big />粘贴快捷方式</Small>
            <Small $mt={13} $ml={-50}><svg viewBox="0 0 16 16"><path d="M4 0l5 10M12 0L7 10" stroke="#8d827c" /><circle cx="5" cy="12.500" r="2.500" fill="none" stroke="#5b4b45" strokeWidth="1.500" /><circle cx="11" cy="12.500" r="2.500" fill="none" stroke="#5b4b45" strokeWidth="1.500" /></svg>剪切</Small>
          </SmallColumn>
        </GroupBody>
        <GroupName>剪贴板</GroupName>
      </Group>
      <Group $w={181}>
        <GroupBody $pad={1}>
          <Big $w={42}><FolderBig><path d="M14 23l8-7v4h9v6h-9v4z" fill="#5b4b45" /></FolderBig><span>移动到</span><Caret /></Big>
          <Big $w={43}><FolderBig><path d="M17 1h8l4 3v9H17z" fill="#f4f4f3" stroke="#8d827c" /><path d="M20 7h8l3 3v9H20z" fill="#f4f4f3" stroke="#5b4b45" /></FolderBig><span>复制到</span><Caret /></Big>
          <BodyDivider />
          <Big $w={36}><svg viewBox="0 0 32 32"><path d="M5 6l22 21M27 6L5 27" stroke="#4a3b36" strokeWidth="4" /></svg><span>删除</span><Caret /></Big>
          <Big $w={46}><svg viewBox="0 0 32 32"><path d="M2 9h20M2 22h20M2 9v13M26 9h5v13h-5" fill="none" stroke="#8d827c" /><path d="M5 12h13v8H5z" fill="#5b4b45" /><path d="M24 4v25M20 4h8M20 29h8" stroke="#5b4b45" strokeWidth="2" /></svg><span>重命名</span></Big>
        </GroupBody>
        <GroupName>组织</GroupName>
      </Group>
      <Group $w={142}>
        <GroupBody $pad={4}>
          <Big $w={46}><FolderBig><path d="M16 8v20M19 6v20" stroke="#8d827c" strokeDasharray="2 2" /></FolderBig><span>新建</span><span>文件夹</span></Big>
          <SmallColumn $pad={3}>
            <Small><svg viewBox="0 0 16 16"><path d="M.500.500h9v9h-9zM4.500 5.500h7v6h-7z" fill="#f4f4f3" stroke="#5b4b45" /><path d="M8 8.500h7v7H8z" fill="#e4e3e0" stroke="#bdbab6" /></svg>新建项目 <Caret /></Small>
            <Small><svg viewBox="0 0 16 16"><path d="M4.500 4.500h10v11h-10z" fill="#f4f4f3" stroke="#5b4b45" /><path d="M1 1l3 2M1 8h3M8 0v3" stroke="#5b4b45" /></svg>轻松访问 <Caret /></Small>
          </SmallColumn>
        </GroupBody>
        <GroupName>新建</GroupName>
      </Group>
      <Group $w={115}>
        <GroupBody>
          <Big $w={45}><svg viewBox="0 0 32 32"><path d="M5 2h17l5 5v23H5z" fill="#f6f6f5" stroke="#bdbab6" /><path d="M27 7v23H6M22 2v5h5" fill="none" stroke="#5b4b45" strokeWidth="1.500" /><path d="M10 17l5 6 8-12" fill="none" stroke="#5b4b45" strokeWidth="2" /></svg><span>属性</span></Big>
          <SmallColumn $pad={20}>
            <Small><Page />编辑</Small>
            <Small $mt={34.500} $ml={-59}><svg viewBox="0 0 16 16"><path d="M2 0h9v13H1z" fill="#bdbab6" /><path d="M11 3h4v12H6" fill="none" stroke="#5b4b45" /></svg>打开 <Caret /></Small>
          </SmallColumn>
        </GroupBody>
        <GroupName>打开</GroupName>
      </Group>
      <Group $w={90}>
        <GroupBody>
          <SmallColumn $pad={11}>
            <Small><svg viewBox="0 0 16 16"><path d="M.500 1.500h15v13H.500zM8 1v14M0 8h16" fill="#cfcec9" stroke="#5b4b45" strokeWidth="1.400" /></svg>全部选择</Small>
            <Small><svg viewBox="0 0 16 16"><path d="M1 1h5v5H1zM10 1h5v5h-5zM1 10h5v5H1zM10 10h5v5h-5z" fill="#f6f6f5" stroke="#bdbab6" /></svg>全部取消</Small>
            <Small><svg viewBox="0 0 16 16"><path d="M1 1h5v5H1zM10 10h5v5h-5z" fill="#f6f6f5" stroke="#bdbab6" /><path d="M9 1h6v6H9zM1 9h6v6H1z" fill="#cfcec9" stroke="#5b4b45" /></svg>反向选择</Small>
          </SmallColumn>
        </GroupBody>
        <GroupName>选择</GroupName>
      </Group>
    </Ribbon>
  );
}

function ExplorerWindow() {
  return (
    <Explorer>
      <ExplorerTitle>
        <QuickAccess><FolderSmall /><Divider $h={10} /><svg width="13" height="16" viewBox="0 0 16 18"><path d="M1 1h11l3 3v13H1z" fill="#fafafa" stroke="#8d827c" /><path d="M4 10l3 3 5-7" fill="none" stroke="#5b4b45" strokeWidth="1.500" /></svg><FolderSmall /><svg width="7" height="7" viewBox="0 0 7 7"><path d="M0 .500h7" stroke="#0a0607" /><path d="M0 3h7L3.500 7z" fill="#0a0607" /></svg><Divider /></QuickAccess>
        CiticOption
        <WindowButtons $gap={33.500}><WinMin /><WinMax /><WinClose /></WindowButtons>
      </ExplorerTitle>
      <RibbonTabs>
        <RibbonTab $w={55} $file>文件</RibbonTab><RibbonTab $w={52} $on>主页</RibbonTab><RibbonTab $w={54}>共享</RibbonTab><RibbonTab $w={52}>查看</RibbonTab>
        <RibbonEnd><Chevron d="up" c="#bdbab6" /><svg width="15" height="15" viewBox="0 0 15 15"><circle cx="7.500" cy="7.500" r="7.500" fill="#61504a" /><path d="M5.500 6q0-2 2-2t2 2-2 2.500M7.500 10v1.500" fill="none" stroke="#cfcec9" strokeWidth="1.300" /></svg></RibbonEnd>
      </RibbonTabs>
      <RibbonBar />
      <AddressRow>
        <NavArrows>
          <S w={14} h={14} c="#5b4b45" sw={2}><path d="M15 8H2M7 3L2 8l5 5" /></S>
          <S w={14} h={14} c="#cfcec9" sw={2}><path d="M1 8h13M9 3l5 5-5 5" /></S>
          <Chevron s={6} />
          <S w={12} h={14} c="#5b4b45" sw={2}><path d="M8 15V2M3 7l5-5 5 5" /></S>
        </NavArrows>
        <Address>
          <Crumb $w={37}><FolderSmall /><Chevron d="right" s={6} /></Crumb>
          <Crumb $w={61}>此电脑 <Chevron d="right" s={6} /></Crumb>
          <Crumb $w={49}>文档 <Chevron d="right" s={6} /></Crumb>
          <Crumb $w={57}>Settle <Chevron d="right" s={6} /></Crumb>
          <Crumb $w={100}>CiticOption</Crumb>
          <AddressEnd><Chevron s={10} /><S w={11} h={12} c="#5b4b45" sw={2}><path d="M13 5a6 6 0 1 1-9-1M1 1h6v5" /></S></AddressEnd>
        </Address>
        <SearchBox>搜索"CiticOption"<S w={11} h={11} c="#5b4b45" sw={2}><circle cx="10" cy="6" r="4.500" /><path d="M7 9l-6 6" /></S></SearchBox>
      </AddressRow>
      <Content>
        <Tree>
          {TREE.map(([icon, text, o], i) => (
            <TreeItem key={i} $root={o.root} $mt={o.mt} $on={o.on}>{tree[icon]}<span>{text}</span>{o.pin && tree.pin}</TreeItem>
          ))}
        </Tree>
        <Files>
          <SortMark><Chevron d="up" s={8} w={1} /></SortMark>
          <HeadRow><span>名称</span><i /><span>修改日期</span><span>类型</span><i /><span>大小</span><i /></HeadRow>
          {FILES.map(([name, date, size, xl]) => (
            <FileRow key={name}>{xl ? <Excel /> : <Page lines />}<span>{name}</span><Meta>{date}</Meta><Meta $wide={xl}>{xl ? "Microsoft Excel ..." : "文本文档"}</Meta><Meta $right>{size} KB</Meta></FileRow>
          ))}
        </Files>
        <ScrollBar><ScrollEnd><Chevron d="up" s={8} /></ScrollEnd><Thumb /><ScrollEnd $last><Chevron s={8} /></ScrollEnd></ScrollBar>
      </Content>
      <StatusRow>
        <span>53 个项目</span><span>选中 1 个项目</span><span>26.7 KB</span>
        <Views>
          <svg width="22" height="23" viewBox="0 0 22 23"><path d="M.500.500h21v22H.500z" fill="#d8d7d3" stroke="#61504a" /><path d="M4 7h4M4 11h4M4 15h4" stroke="#fafafa" strokeWidth="2" /><path d="M10 7.500h9M10 11.500h9M10 15.500h9" stroke="#5b4b45" strokeDasharray="4 1" /></svg>
          <svg width="15" height="12" viewBox="0 0 15 12"><path d="M.500.500h14v11H.500z" fill="#eceae8" stroke="#b5b0ac" /><path d="M3 4h6v2h-2v3H3z" fill="#3a2d29" /></svg>
        </Views>
      </StatusRow>
    </Explorer>
  );
}

/* ---------- taskbar ---------- */

function TaskbarRow() {
  return (
    <Taskbar>
      <Task><svg width="18" height="17" viewBox="0 0 18 17"><path d="M0 2.500l7-1V8H0zM8 1.300L18 0v8H8zM0 9h7v6.500l-7-1zM8 9h10v8L8 15.700z" fill="#fafafa" /></svg></Task>
      <Task $w={46}><S w={17} h={17} c="#efedea" sw={1.300}><circle cx="10" cy="6" r="5" /><path d="M6.500 10L1 15.500" /></S></Task>
      <Task $w={51}><svg width="22" height="16" viewBox="0 0 22 16" fill="none" stroke="#efedea" strokeWidth="1.500"><path d="M5 1h12v14H5zM3 3H1v10h2M19 3h2v10h-2" /></svg></Task>
      <Task $open><svg width="22" height="20" viewBox="0 0 22 20"><path d="M0 1h8l1 1h13v17H0z" fill="#cfcec9" /><path d="M4 19v-6h14v6h-3v-3H7v3z" fill="#61504a" /></svg></Task>
      <Task><svg width="22" height="22" viewBox="0 0 22 22"><circle cx="11" cy="11" r="10.500" fill="#61504a" /><path d="M11 6h10a10.500 10.500 0 0 1-9 15l4-8z" fill="#cfcec9" /><circle cx="11" cy="11" r="4.500" fill="#4a3b36" stroke="#cfcec9" /></svg></Task>
      <Task $open><svg width="24" height="24" viewBox="0 0 24 24"><path d="M0 0h24v24H0z" fill="#4a3b36" /><ellipse cx="12" cy="12" rx="11" ry="11.500" fill="#dddbd7" /><path d="M12 3v18M8 5v14M16 5v14M4 8v7M20 8v7" stroke="#61504a" strokeWidth="1.300" /></svg></Task>
      <Task $open><svg width="24" height="24" viewBox="0 0 24 24"><path d="M0 0h24v24H0z" fill="#85766f" /><path d="M4 6l4 12 4-10 4 10 4-12" fill="none" stroke="#fafafa" strokeWidth="3" /></svg></Task>
      <Task $open><svg width="24" height="24" viewBox="0 0 24 24"><path d="M1 1h22v22H1z" fill="#120c0c" stroke="#61504a" strokeWidth="2.500" /><path d="M5 19Q6 7 18 6q0 10-9 11M5 19L18 6" fill="#4a3b36" stroke="#7d6e67" /></svg></Task>
      <Task $on $open><svg width="24" height="24" viewBox="0 0 24 24"><circle cx="14" cy="11" r="9.500" fill="#cfcec9" /><path d="M3 12q6-3 8 2 4 4 8 3-5 6-11 3z" fill="#61504a" /><path d="M8 3l5 1-3 3z" fill="#fff" /></svg></Task>
      <Tray>
        <Chevron d="up" c="#efedea" s={14} w={1.300} />
        <TrayGap $w={7} />
        <svg width="17" height="16" viewBox="0 0 17 16"><path d="M0 5h3l4-4v13l-4-4H0z" fill="none" stroke="#efedea" /><circle cx="12" cy="11" r="4.500" fill="#85766f" /><path d="M10 9l4 4M14 9l-4 4" stroke="#fff" strokeWidth="1.500" /></svg>
        <TrayGap $w={7} />
        <svg width="18" height="16" viewBox="0 0 18 16" fill="none" stroke="#efedea" strokeWidth="1.300"><path d="M6 2h11v9H4V7M0 1h5v5H0M10 11v3M6 14.500h8" /></svg>
        <TrayText $w={29} $size={13}>中</TrayText>
        <TrayText $w={66}>20:52<br />2020/4/11</TrayText>
        <TrayGap $w={13} />
        <svg width="26" height="26" viewBox="0 0 26 26"><path d="M2 2h16v13H11l-5 4v-4H2z" fill="#fafafa" /><path d="M5 6h10M5 9h10M5 12h6" stroke="#0a0607" /><circle cx="17.500" cy="18" r="8" fill="#1d1615" stroke="#61504a" /><text x="14.500" y="22" fontSize="12" fontFamily={UI} fill="#fafafa">5</text></svg>
        <TrayGap $w={12} />
        <ShowDesktop />
      </Tray>
    </Taskbar>
  );
}

export default function App() {
  return (
    <Screen>
      <Global />
      <TitleBar>
        <svg width="17" height="18" viewBox="0 0 17 18"><rect x="1" y="1" width="15" height="16" rx="5" fill="#cfcec9" stroke="#61504a" strokeWidth="1.500" /><path d="M5 5v8M8.500 4v10M12 5v8" stroke="#eee" /></svg>
        <AppTitle>中信期货期权宝</AppTitle><span>当前账号｜未登录</span>
        <WindowButtons $gap={34}><WinMin /><WinRestore /><WinClose /></WindowButtons>
      </TitleBar>
      <Toolbar>
        {TOOLS.map(([icon, text, w, gap, pad]) => (
          <ToolButton key={text} $w={w} $gap={gap} $pad={pad}><S>{toolIcons[icon]}</S>{text}</ToolButton>
        ))}
        <span style={{ marginLeft: "auto" }} />
        <ToolButton $w={57} $gap={3} $pad={3}><S><path d="M3 2v10l3-3h4z" fill="#efedea" /><path d="M9 11h3v3" /></S>点点通</ToolButton>
        <SearchCode>请输入商品代码／拼音</SearchCode>
        <ToolIcons>
          <svg width="14" height="26" viewBox="0 0 14 26"><circle cx="9" cy="4" r="3.500" fill="#fafafa" /><path d="M3 12q4-3 6-2-3 8-3 12 2 0 4-2" fill="none" stroke="#fafafa" strokeWidth="2.500" /></svg>
          <Gear />
        </ToolIcons>
        <TrayGap $w={9} />
      </Toolbar>
      <Main><Chart /><OrderBook /></Main>
      <Backdrop><Notice>交易系统未登录，请点击右下角“登录”按钮进行操作!</Notice><Login>登录</Login></Backdrop>
      <IndexBar>
        <IndexLogo>钱粉</IndexLogo>
        {INDEXES.map(([name, a, v, b, pct, c, sum, d], i) => (
          <React.Fragment key={name}>
            <Cell $w={a} $kind="name">{name}</Cell><Cell $w={b} $kind="dim">{v}</Cell><Cell $w={c} $kind="dim">{pct}</Cell>
            <Cell $w={d} $kind="sum">{sum}<i>亿</i></Cell>
            <Cell $w={8 + INDEX_GAPS[i]}><svg width="8" height="8" viewBox="0 0 8 8"><path d="M8 0v8H0z" fill="#8d807a" /></svg></Cell>
          </React.Fragment>
        ))}
        <Clock><svg width="12" height="13" viewBox="0 0 12 13"><path d="M0 1h12L7 7v5H5V7z" fill="#cfcec9" /></svg><Divider $h={14} /><span>20:52:08</span></Clock>
      </IndexBar>
      <TaskbarRow />
      <Watermark $x={324} $y={9} $size={16.800} $split={15}>一手v：qianren03</Watermark>
      <Watermark $x={968} $y={8} $size={20} $split={16}>更多:www.ym8a.cn</Watermark>
      <Watermark $x={159} $y={902} $size={20}>更多:www.ym8a.cn</Watermark>
      <ExplorerWindow />
      <Course>机器学习教程</Course>
      <VideoLogo>bilibili</VideoLogo>
      <Pointer width="14" height="21" viewBox="0 0 14 21"><path d="M1 1v15l3.500-3 2.500 6 3-1.200-2.500-5.800H13z" fill="#fafafa" stroke="#3a2d29" /></Pointer>
    </Screen>
  );
}
